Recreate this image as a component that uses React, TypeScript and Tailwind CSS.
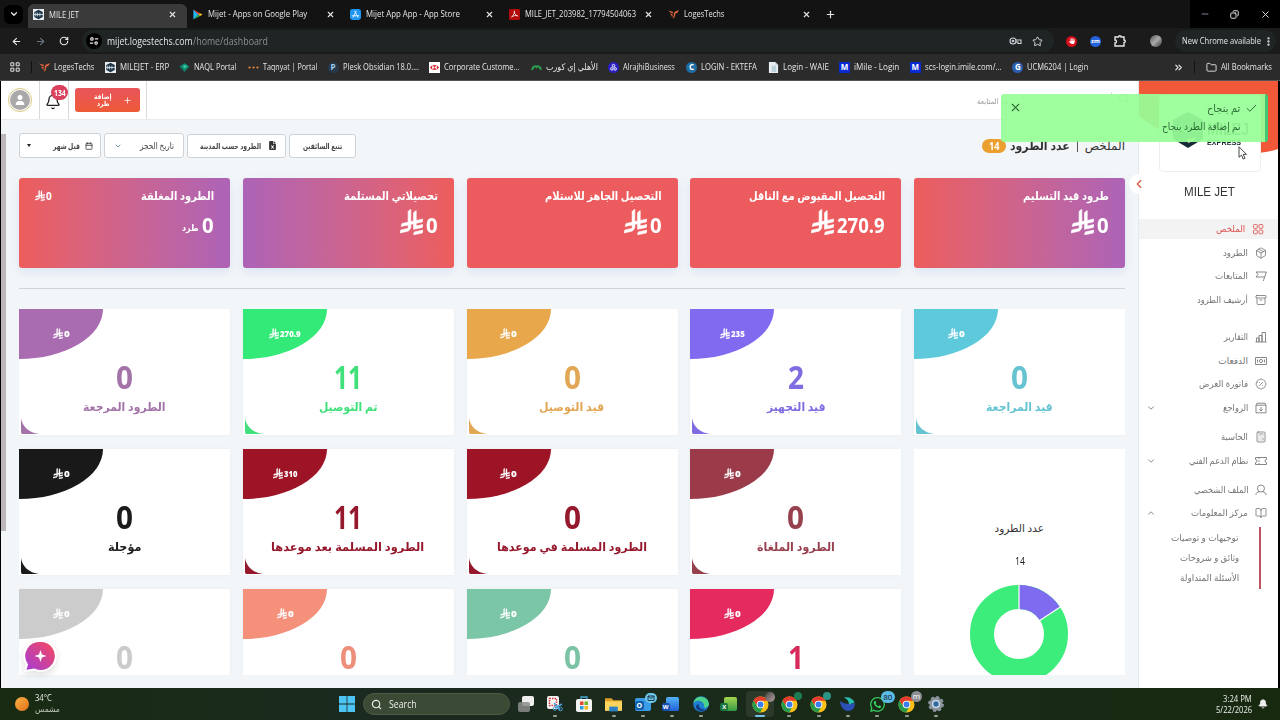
import { useLayoutEffect, useRef, type ReactNode } from "react";
import {
  Archive, ArrowLeft, ArrowRight, BadgePercent, Bell, BookOpen, Calculator, Calendar, Check, ChevronDown,
  ChevronLeft, ChevronUp, ChevronsRight, Copy, EllipsisVertical, Folder, Minus, Package, Plus, RotateCw,
  Search, Star, X,
} from "lucide-react";
import { FaFileExcel, FaHand, FaUser, FaWhatsapp } from "react-icons/fa6";

// One-line label squeezed or stretched to a fixed width
function Fit({ w, children, className = "", rtl = false }: { w: number; children: ReactNode; className?: string; rtl?: boolean }) {
  const ref = useRef<HTMLSpanElement>(null);
  useLayoutEffect(() => {
    const el = ref.current;
    if (!el || !el.offsetWidth) return;
    el.style.transform = `scaleX(${w / el.offsetWidth})`;
  }, [w]);
  return (
    <span dir={rtl ? "rtl" : "ltr"} className={`block shrink-0 whitespace-nowrap ${className}`} style={{ width: w }}>
      <span ref={ref} className={`inline-block ${rtl ? "origin-right" : "origin-left"}`}>{children}</span>
    </span>
  );
}

function Riyal({ className }: { className: string }) {
  return (
    <svg viewBox="0 0 1124.14 1256.39" className={className} fill="currentColor" stroke="currentColor" strokeWidth="30">
      <path d="M699.62 1113.02c-20.06 44.48-33.32 92.75-38.4 143.37l424.51-90.24c20.06-44.47 33.31-92.75 38.4-143.37z" />
      <path d="M1085.73 895.8c20.06-44.47 33.32-92.75 38.4-143.37l-330.68 70.33v-135.2l292.27-62.11c20.06-44.47 33.32-92.75 38.4-143.37l-330.68 70.27V66.13c-50.67 28.45-95.67 66.32-132.25 110.99v403.35l-132.25 28.11V0c-50.67 28.44-95.67 66.32-132.25 110.99v525.69l-295.91 62.88c-20.06 44.47-33.33 92.75-38.42 143.37l334.33-71.05v170.26l-358.3 76.14c-20.06 44.47-33.32 92.75-38.4 143.37l375.04-79.7c30.53-6.35 56.77-24.4 73.83-49.24l68.78-101.97c7.14-10.57 11.3-23.29 11.3-36.99v-149.98l132.25-28.11v270.4z" />
    </svg>
  );
}

function LogesIcon() {
  return (
    <svg viewBox="0 0 12 12" className="size-[11px] shrink-0" fill="#e8663c">
      <path d="M0 1.5 5 3l1 2-3-.8zM12 1 7 3.2 5.5 11 7.2 9l1-4 2-1z" />
      <path d="m2 5 3 .8-.4 4L3.8 7z" />
    </svg>
  );
}

function MileIcon() {
  return (
    <svg viewBox="0 0 12 12" className="size-[11px] shrink-0">
      <path fill="#e8edf2" d="M0 0h12v12H0z" />
      <path fill="#1c3445" d="m6 .8 4.6 2.6v5.2L6 11.2 1.4 8.6V3.4z" />
      <path stroke="#dbe7ee" strokeWidth=".9" d="M1 6h10M3 4v4M5 4v4M7.5 4v4" />
    </svg>
  );
}

function PlayIcon() {
  return (
    <svg viewBox="0 0 12 12" className="size-[11px] shrink-0">
      <path fill="#23b5f5" d="M1.5.5v11L7 6z" />
      <path fill="#33b45a" d="M1.5 11.5 7 6l1.8 1.5z" />
      <path fill="#ea4335" d="M1.500.5 7 6l1.800-1.500z" />
      <path fill="#fbc116" d="M8.800 4.500 11.500 6 8.800 7.500 7 6z" />
    </svg>
  );
}

function AppStoreIcon() {
  return (
    <svg viewBox="0 0 12 12" className="size-[11px] shrink-0">
      <rect width="12" height="12" rx="2.600" fill="#1e96f3" />
      <path d="M6.600 2.500 3.400 9M5.400 2.500 8.600 9M2.300 7.400h7.400" stroke="#fff" strokeWidth=".9" strokeLinecap="round" />
    </svg>
  );
}

function PdfIcon() {
  return (
    <svg viewBox="0 0 12 12" className="size-[11px] shrink-0">
      <rect width="12" height="12" rx="1.500" fill="#b30b0b" />
      <path d="M5.800 2.300c1.200 0-.4 4-3.200 6.800M5.800 2.300c-.9 1.200 1.300 5.200 3.800 5.300M3 8.500c1.500-1.200 4-1.700 6.500-1" stroke="#fff" strokeWidth=".8" fill="none" />
    </svg>
  );
}

const tabs = [
  { title: "MILE JET", w: 30, icon: <MileIcon /> },
  { title: "Mijet - Apps on Google Play", w: 99, icon: <PlayIcon /> },
  { title: "Mijet App App - App Store", w: 94, icon: <AppStoreIcon /> },
  { title: "MILE_JET_203982_17794504063", w: 111, icon: <PdfIcon /> },
  { title: "LogesTechs", w: 40, icon: <LogesIcon /> },
];

function Letter({ children, className }: { children: ReactNode; className: string }) {
  return (
    <span className={`flex size-[11px] shrink-0 items-center justify-center text-[8px] leading-none font-bold ${className}`}>{children}</span>
  );
}

const bookmarks = [
  { title: "LogesTechs", w: 40, icon: <LogesIcon /> },
  { title: "MILEJET - ERP", w: 49, icon: <MileIcon /> },
  {
    title: "NAQL Portal", w: 43,
    icon: (
      <svg viewBox="0 0 12 12" className="size-[11px] shrink-0">
        <path fill="#12806a" d="m6 1 5.500 4L6 11 .5 5z" />
        <circle cx="6.500" cy="5" r="2" fill="#2fc6a0" />
      </svg>
    ),
  },
  {
    title: "Taqnyat | Portal", w: 54,
    icon: (
      <svg viewBox="0 0 12 12" className="size-[11px] shrink-0" fill="#f08a3c">
        <circle cx="1.700" cy="6" r="1.200" /><circle cx="6" cy="6" r="1.200" /><circle cx="10.300" cy="6" r="1.200" />
      </svg>
    ),
  },
  { title: "Plesk Obsidian 18.0....", w: 76, icon: <Letter className="rounded-full bg-[#26384a] text-[#9fd0f0]">P</Letter> },
  {
    title: "Corporate Custome...", w: 76,
    icon: (
      <svg viewBox="0 0 12 12" className="size-[11px] shrink-0">
        <path fill="#fff" d="M0 0h12v12H0z" />
        <path fill="#d8232a" d="M3.500 3.500h5L6 6zM3.500 8.500h5L6 6zM3.500 3.500 1 6l2.500 2.500zM8.500 3.500 11 6 8.500 8.500z" />
      </svg>
    ),
  },
  {
    title: "الأهلي إي كورب", w: 52, rtl: true,
    icon: (
      <svg viewBox="0 0 12 12" className="size-[11px] shrink-0" fill="none" stroke="#2c9b50" strokeWidth="2.200">
        <path d="M1 8.500C2.500 4.500 5 4 6 5.500c1-1.500 3.500-1 5 3" />
      </svg>
    ),
  },
  {
    title: "AlrajhiBusiness", w: 52,
    icon: (
      <svg viewBox="0 0 12 12" className="size-[11px] shrink-0" fill="none" stroke="#fff">
        <circle cx="6" cy="6" r="6" fill="#2b1fc4" stroke="none" />
        <circle cx="6" cy="4" r="1.400" /><circle cx="4.200" cy="7.500" r="1.400" /><circle cx="7.800" cy="7.500" r="1.400" />
      </svg>
    ),
  },
  { title: "LOGIN - EKTEFA", w: 56, icon: <Letter className="rounded-full bg-[#1f6ea3] text-white">C</Letter> },
  {
    title: "Login - WAIE", w: 46,
    icon: (
      <svg viewBox="0 0 12 12" className="size-[11px] shrink-0">
        <path fill="#e9eef2" d="M1 0h7l3 3v9H1z" />
        <path fill="#8fb3c0" d="M8 0v3h3zM4 4h5v7H4z" opacity=".5" />
      </svg>
    ),
  },
  { title: "iMile - Login", w: 45, icon: <Letter className="bg-[#0a2bd0] text-white">M</Letter> },
  { title: "scs-login.imile.com/...", w: 77, icon: <Letter className="bg-[#0a2bd0] text-white">M</Letter> },
  { title: "UCM6204 | Login", w: 61, icon: <Letter className="rounded-full bg-[#2b5fae] text-white">G</Letter> },
];

function Browser() {
  return (
    <header className="shrink-0 text-[9px] leading-3 text-[#e6e6e6]">
      <div className="flex h-7 items-center bg-[#131313] pl-1">
        <span className="mr-[5px] flex size-[19px] shrink-0 items-center justify-center rounded-md bg-black">
          <ChevronDown className="size-2.5" strokeWidth={3} />
        </span>
        {tabs.map((tab, i) => (
          <div
            key={tab.title}
            className={`flex h-6 w-[158.7px] shrink-0 items-center gap-[5px] rounded-t-md pl-[5px] pr-[10px] ${
              i === 0 ? "self-end bg-[#3a3a3a] pb-[3px]" : ""
            }`}
          >
            {tab.icon}
            <Fit w={tab.w}>{tab.title}</Fit>
            <X className="ml-auto size-[9px] shrink-0" strokeWidth={3} />
          </div>
        ))}
        <Plus className="ml-1 size-[11px]" strokeWidth={2.5} />
        <div className="ml-auto flex h-full items-center bg-black">
          <Minus className="mx-[10px] size-[10px] text-gray-400" />
          <Copy className="mx-[10px] size-[9px] -scale-x-100" strokeWidth={2.5} />
          <X className="ml-[11px] mr-[9px] size-[11px]" />
        </div>
      </div>
      <div className="flex h-[26px] items-center bg-[#1b1b1b]">
        <ArrowLeft className="ml-[11px] size-[11px]" strokeWidth={2.5} />
        <ArrowRight className="ml-[13px] size-[11px] text-gray-500" strokeWidth={2.5} />
        <RotateCw className="ml-[13px] size-[10px]" strokeWidth={2.8} />
        <div className="ml-[13px] flex h-[22px] w-[972px] items-center rounded-full bg-[#1f2425] pl-1">
          <span className="flex size-4 items-center justify-center rounded-full bg-black">
            <svg viewBox="0 0 12 12" className="size-2.5" fill="none" stroke="currentColor" strokeWidth="1.400">
              <circle cx="3.500" cy="3.500" r="1.500" /><path d="M7 3.500h4M1 8.500h4" /><circle cx="8.500" cy="8.500" r="1.500" />
            </svg>
          </span>
          <Fit w={85.5} className="ml-[5px] text-[10px]">mijet.logestechs.com</Fit>
          <Fit w={75} className="text-[10px] text-[#8b8f91]">/home/dashboard</Fit>
          <svg viewBox="0 0 13 8" className="ml-auto h-2 w-[13px] text-gray-300" fill="none" stroke="currentColor" strokeWidth="1.100">
            <circle cx="4" cy="4" r="3" /><circle cx="4" cy="4" r=".8" /><path d="M7 3h5v3.500H9V5H7" />
          </svg>
          <Star className="ml-[10px] mr-[11px] size-[11px]" />
        </div>
        <span className="ml-3 flex size-[11px] items-center justify-center rounded-full bg-[#d5101d]">
          <FaHand className="size-1.5 text-white" />
        </span>
        <span className="ml-[13px] flex size-[11px] items-center justify-center rounded-full bg-[#2464dd] text-[6px] font-bold text-white">zm</span>
        <svg viewBox="0 0 12 12" className="ml-[13px] size-[12px]" fill="none" stroke="currentColor" strokeWidth="1.400">
          <path d="M1 2h3.500a1.300 1.300 0 0 1 2.600 0H10v3a1.300 1.300 0 0 1 0 2.600V11H1V8a1.500 1.500 0 0 0 0-3z" />
        </svg>
        <span className="ml-[24px] size-[12px] rounded-full bg-linear-to-br from-[#565a5e] via-[#aaa] to-[#36393c]" />
        <span className="ml-auto mr-1 flex h-[22px] items-center rounded-full bg-[#1f2425] pl-[7px] pr-0.5">
          <Fit w={79}>New Chrome available</Fit>
          <EllipsisVertical className="ml-0.5 size-[11px]" strokeWidth={3} />
        </span>
      </div>
      <div className="flex h-[27px] items-center gap-[10.6px] border-b border-[#555] bg-[#2b2b2c] pl-[10px] pr-2">
        <svg viewBox="0 0 10 10" className="size-[10px]" fill="none" stroke="currentColor">
          <path d="M.8.8h3v3h-3zM6.200.8h3v3h-3zM.8 6.200h3v3h-3zM6.200 6.200h3v3h-3z" />
        </svg>
        <span className="-mr-[3px] h-3 w-px bg-[#111]" />
        {bookmarks.map((b) => (
          <div key={b.title} className="flex items-center gap-1">
            {b.icon}
            <Fit w={b.w} rtl={b.rtl}>{b.title}</Fit>
          </div>
        ))}
        <ChevronsRight className="ml-auto size-[11px]" strokeWidth={2.5} />
        <span className="h-3 w-px bg-[#111]" />
        <div className="flex items-center gap-1">
          <Folder className="size-[11px]" />
          <Fit w={51}>All Bookmarks</Fit>
        </div>
      </div>
    </header>
  );
}

const totals = [
  { title: "طرود قيد التسليم", w: 86, value: "0", vw: 12, bg: "bg-linear-to-r from-[#ed5d5b] to-[#ad63b7]" },
  { title: "التحصيل المقبوض مع الناقل", w: 136, value: "270.9", vw: 48, bg: "bg-[#ec5b5d]" },
  { title: "التحصيل الجاهز للاستلام", w: 117, value: "0", vw: 12, bg: "bg-[#ec5b5d]" },
  { title: "تحصيلاتي المستلمة", w: 94, value: "0", vw: 12, bg: "bg-linear-to-r from-[#ad63b7] to-[#ed5d5b]" },
  { title: "الطرود المغلقة", w: 73, value: "0", vw: 12, bg: "bg-linear-to-r from-[#ed5d5b] to-[#ad63b7]", closed: true },
];

type Status = { label: string; w: number; count: string; amount: string; bg: string; text: string };

const statuses: Status[] = [
  { label: "قيد المراجعة", w: 67, count: "0", amount: "0", bg: "bg-[#5fc9dc]", text: "text-[#66c3d1]" },
  { label: "قيد التجهيز", w: 59, count: "2", amount: "235", bg: "bg-[#826af0]", text: "text-[#806be0]" },
  { label: "قيد التوصيل", w: 65, count: "0", amount: "0", bg: "bg-[#e8a74a]", text: "text-[#e2a755]" },
  { label: "تم التوصيل", w: 59, count: "11", amount: "270.9", bg: "bg-[#33ea78]", text: "text-[#40e07b]" },
  { label: "الطرود المرجعة", w: 83, count: "0", amount: "0", bg: "bg-[#aa6cb1]", text: "text-[#a474a9]" },
  { label: "الطرود الملغاة", w: 78, count: "0", amount: "0", bg: "bg-[#9b3b4a]", text: "text-[#97404e]" },
  { label: "الطرود المسلمة في موعدها", w: 150, count: "0", amount: "0", bg: "bg-[#9d1427]", text: "text-[#96182c]" },
  { label: "الطرود المسلمة بعد موعدها", w: 153, count: "11", amount: "310", bg: "bg-[#9d1427]", text: "text-[#96182c]" },
  { label: "مؤجلة", w: 33, count: "0", amount: "0", bg: "bg-[#191919]", text: "text-[#1b1b1b]" },
  { label: "", w: 0, count: "1", amount: "0", bg: "bg-[#e52a5f]", text: "text-[#d62a5b]" },
  { label: "", w: 0, count: "0", amount: "0", bg: "bg-[#7cc6a8]", text: "text-[#7cc3a6]" },
  { label: "", w: 0, count: "0", amount: "0", bg: "bg-[#f5917a]", text: "text-[#ee8f7b]" },
  { label: "", w: 0, count: "0", amount: "0", bg: "bg-[#cccccc]", text: "text-[#cbcbcb]" },
];

const amountWidths: Record<string, number> = { "0": 5.5, "235": 14, "310": 13.5, "270.9": 21 };
const countWidths: Record<string, number> = { "0": 17, "1": 16, "2": 16, "11": 28 };

function StatusCard({ s }: { s: Status }) {
  return (
    <div className="relative flex h-[126px] flex-col items-center bg-white shadow-[0_0_4px_rgba(0,0,0,0.04)]">
      <div dir="ltr" className={`absolute left-0 top-0 flex h-[50px] w-[84px] items-center justify-center gap-px rounded-br-[100%] text-white ${s.bg}`}>
        <Riyal className="mb-0.5 h-[11px] w-[10px]" />
        <Fit w={amountWidths[s.amount]} className="text-[9px] leading-[10px] font-extrabold">{s.amount}</Fit>
      </div>
      <Fit w={countWidths[s.count]} className={`mt-[52px] text-[31.5px] leading-8 font-bold ${s.text}`}>{s.count}</Fit>
      {s.label && <Fit w={s.w} rtl className={`mt-1.5 text-[11.5px] leading-4 font-bold ${s.text}`}>{s.label}</Fit>}
      <svg viewBox="0 0 18 16" className={`absolute bottom-px left-0.5 h-4 w-[18px] ${s.text}`} fill="currentColor">
        <path d="M0 0c1 8 8 15 18 16H1.500Q0 16 0 14z" />
      </svg>
    </div>
  );
}

function ChartCard() {
  return (
    <div className="row-span-2 flex flex-col items-center bg-white pt-[71px]">
      <Fit w={49} rtl className="text-[10.5px] leading-4 text-[#333]">عدد الطرود</Fit>
      <Fit w={10} className="mt-[17px] text-[10.5px] leading-4 text-[#222]">14</Fit>
      <svg viewBox="0 0 100 100" className="mr-px mt-[15px] size-[100px] shrink-0" fill="none" strokeWidth="24">
        <circle cx="50" cy="50" r="37" stroke="#3ced7b" />
        <path d="M50 13a37 37 0 0 1 31 16.800" stroke="#7f6bf0" />
        <path d="M50 0v26M70 37 92 22.500" stroke="#fff" strokeWidth="1.200" />
      </svg>
    </div>
  );
}

function Filters() {
  return (
    <div dir="ltr" className="flex items-center gap-[3px] text-[#444]">
      <div className="flex h-[25px] w-[82px] items-center justify-between rounded-[3px] border border-[#cdd3d8] bg-white px-[7px]">
        <span className="border-x-[2.5px] border-t-[3px] border-x-transparent border-t-[#222]" />
        <span className="flex items-center gap-[5px]">
          <Fit w={27} rtl className="text-[8px] font-bold">قبل شهر</Fit>
          <Calendar className="size-2" strokeWidth={2.5} />
        </span>
      </div>
      <div className="flex h-[25px] w-[80px] items-center justify-between rounded-[3px] border border-[#cdd3d8] bg-white px-[9px]">
        <ChevronDown className="size-2 text-[#6fa0a4]" strokeWidth={3} />
        <Fit w={34} rtl className="text-[9px]">تاريخ الحجز</Fit>
      </div>
      <div className="flex h-6 w-[99px] items-center justify-end gap-[7px] rounded-[3px] border border-[#cdd3d8] bg-white pr-[8px]">
        <Fit w={61} rtl className="text-[8px] font-bold">الطرود حسب المدينة</Fit>
        <FaFileExcel className="size-[9px] text-[#333]" />
      </div>
      <div className="flex h-6 w-[67px] items-center justify-center rounded-[3px] border border-[#cdd3d8] bg-white">
        <Fit w={39} rtl className="text-[8px] font-bold">تتبع السائقين</Fit>
      </div>
    </div>
  );
}

function Dashboard() {
  return (
    <main className="relative flex w-[1138px] shrink-0 flex-col overflow-hidden bg-[#f2f6f8]">
      <div className="flex h-[39px] shrink-0 border-b border-[#e8ebed] bg-white">
        <div className="flex w-[39px] items-center justify-center border-r border-[#d9d9d9]">
          <span className="flex size-6 items-center justify-center rounded-full border border-[#d8c67c]">
            <span className="flex size-5 items-center justify-center rounded-full bg-[#a9a9a9]">
              <FaUser className="size-2.5 text-white" />
            </span>
          </span>
        </div>
        <div className="relative flex w-[29px] items-center justify-center border-r border-[#d9d9d9]">
          <Bell className="mr-0.5 mt-1 size-4 text-[#222]" />
          <span className="absolute right-0 top-[4px] flex h-[15px] w-[17px] items-center justify-center rounded-full bg-[#d9415c] text-white">
            <Fit w={12} className="text-[8px] leading-3 font-bold">134</Fit>
          </span>
        </div>
        <div className="flex w-[78px] items-center border-r border-[#d9d9d9] pl-1.5">
          <div className="flex h-6 w-[65px] items-center justify-end gap-[11px] rounded-[3px] bg-linear-to-b from-[#e9555a] to-[#ee5a36] pr-2 text-white">
            <div className="flex flex-col items-center">
              <Fit w={18} rtl className="text-[7px] leading-[7px] font-bold">إضافة</Fit>
              <Fit w={13} rtl className="text-[7px] leading-[7px] font-bold">طرد</Fit>
            </div>
            <Plus className="size-[9px]" />
          </div>
        </div>
        <div className="ml-auto flex items-center pr-[10px]">
          <Fit w={35} rtl className="mt-1 text-[7.5px] text-[#999]">رقم المتابعة</Fit>
          <span className="ml-[99px] h-4 w-px bg-[#ddd]" />
          <Search className="ml-[6px] mb-1 size-[11px] text-[#777]" />
        </div>
      </div>

      <span className="absolute left-0 top-[53px] h-[397px] w-[5px] bg-[#bcb7bb]" />

      <div dir="rtl" className="flex flex-1 flex-col overflow-hidden pl-[18px] pr-[14px] pt-[13px] pb-[13px]">
        <div className="flex h-[25px] shrink-0 items-center justify-between">
          <div className="flex items-center text-[#333]">
            <Fit w={40} rtl className="text-[12px] leading-4">الملخص</Fit>
            <span className="mx-[7px] h-3 w-px bg-[#555]" />
            <Fit w={60} rtl className="text-[12px] leading-4 font-bold">عدد الطرود</Fit>
            <span className="mr-1 flex h-[14px] w-6 items-center justify-center rounded-full bg-[#eb9f2e] text-white">
              <Fit w={10} className="text-[10px] leading-3 font-bold">14</Fit>
            </span>
          </div>
          <Filters />
        </div>

        <div className="mt-5 grid shrink-0 grid-cols-5 gap-[12.75px]">
          {totals.map((t) => (
            <div key={t.title} className={`h-[90px] rounded-[3px] px-4 pt-2.5 text-white shadow-[0_4px_10px_rgba(150,180,230,0.25)] ${t.bg}`}>
              <div className="flex items-center justify-between">
                <Fit w={t.w} rtl className="text-[11.5px] leading-4 font-bold">{t.title}</Fit>
                {t.closed && (
                  <span className="flex items-center gap-px text-[10px] leading-4 font-bold">
                    0<Riyal className="mb-0.5 h-[11px] w-[10px]" />
                  </span>
                )}
              </div>
              <div className="mt-[5px] flex h-[30px] items-center gap-[3px]">
                <Fit w={t.vw} className="text-[22px] leading-6 font-bold">{t.value}</Fit>
                {t.closed ? (
                  <Fit w={17} rtl className="mt-2 text-[9px] leading-3 font-bold">طرد</Fit>
                ) : (
                  <Riyal className="mb-1 h-[26px] w-[23px]" />
                )}
              </div>
            </div>
          ))}
        </div>

        <hr className="mt-5 shrink-0 border-[#cbd5da]" />

        <div className="mt-5 grid min-h-0 flex-1 grid-cols-5 auto-rows-[126px] gap-x-[12.75px] gap-y-[14px] overflow-hidden">
          {statuses.slice(0, 5).map((s, i) => <StatusCard key={i} s={s} />)}
          <ChartCard />
          {statuses.slice(5).map((s, i) => <StatusCard key={i} s={s} />)}
        </div>
      </div>

      <svg viewBox="0 0 36 36" className="absolute left-[21px] top-[557px] size-9 drop-shadow-md">
        <defs>
          <linearGradient id="chat" x1="0" y1="1" x2="1" y2="0">
            <stop stopColor="#a13bd8" /><stop offset="1" stopColor="#fb4a59" />
          </linearGradient>
        </defs>
        <path d="M18.500 3a15 15 0 1 1-6 28.600L3 33l2-6.500A15 15 0 0 1 18.500 3z" fill="url(#chat)" stroke="#fff" strokeWidth="2" />
        <path d="m18.500 12 1.500 4.500 4.500 1.500-4.500 1.500-1.500 4.500-1.500-4.500-4.500-1.500 4.500-1.500z" fill="#fff" />
      </svg>
    </main>
  );
}

// Outline icons of the side menu, on a 12px grid
function Line({ children }: { children: ReactNode }) {
  return (
    <svg viewBox="0 0 12 12" className="size-3 shrink-0" fill="none" stroke="currentColor" strokeWidth=".85" strokeLinejoin="round">
      {children}
    </svg>
  );
}

const menu = [
  {
    label: "الملخص", w: 29, mt: "mt-[19px]", active: true,
    icon: <Line><rect x="1.500" y="1.500" width="3.800" height="3.800" rx=".8" /><rect x="7" y="1.500" width="3.800" height="3.800" rx=".8" /><rect x="1.500" y="7" width="3.800" height="3.800" rx=".8" /><rect x="7" y="7" width="3.800" height="3.800" rx=".8" /></Line>,
  },
  { label: "الطرود", w: 25, mt: "mt-[3.5px]", icon: <Package className="size-3 shrink-0" strokeWidth={1.6} /> },
  { label: "المتابعات", w: 33, mt: "mt-[3.5px]", icon: <Line><path d="M11.300 2H1l2 2.500L1 7h8.700M11.300 2 8.300 11" /></Line> },
  { label: "أرشيف الطرود", w: 51, mt: "mt-1", icon: <Archive className="size-3 shrink-0" strokeWidth={1.6} /> },
  { label: "التقارير", w: 24, mt: "mt-[17px]", icon: <Line><path d="M.5 11h11M1.500 11V7H4v4M4 11V4.500h3V11M7 11V1.500h3.500V11" /></Line> },
  { label: "الدفعات", w: 30, mt: "mt-[3.5px]", icon: <Line><path d="M.5 2.500h11v7H.5zM2.500 4.500v3M9.500 4.500v3" /><circle cx="6" cy="6" r="1.600" /></Line> },
  { label: "فاتورة العرض", w: 49, mt: "mt-[3.5px]", icon: <BadgePercent className="size-3 shrink-0" strokeWidth={1.6} /> },
  { label: "الرواجع", w: 25, mt: "mt-1", arrow: "down", icon: <Line><path d="M1 3.200 2 1.200h8l1 2v7.600H1zM1 3.200h10M6 5v4M4.300 7.300 6 9l1.700-1.700" /></Line> },
  { label: "الحاسبة", w: 27, mt: "mt-[8.5px]", icon: <Calculator className="size-3 shrink-0" strokeWidth={1.6} /> },
  { label: "نظام الدعم الفني", w: 59, mt: "mt-[4.5px]", arrow: "down", icon: <Line><path d="M.5 2.500h11v2a1.500 1.500 0 0 0 0 3v2H.5v-2a1.500 1.500 0 0 0 0-3zM4 2.500v1.500M4 5.200v1.600M4 8v1.500" /></Line> },
  { label: "الملف الشخصي", w: 54, mt: "mt-[8.5px]", icon: <Line><circle cx="6" cy="4.500" r="3.500" /><path d="M4.500 7.800C2.500 8 1 9 .8 11M7.500 7.800c2 .2 3.500 1.200 3.700 3.200" /></Line> },
  { label: "مركز المعلومات", w: 57, mt: "mt-[3.5px]", arrow: "up", icon: <BookOpen className="size-3 shrink-0" strokeWidth={1.6} /> },
];

const links = [
  { label: "توجيهات و توصيات", w: 68 },
  { label: "وثائق و شروحات", w: 59 },
  { label: "الأسئلة المتداولة", w: 59 },
];

function Sidebar() {
  return (
    <aside dir="rtl" className="relative w-[139px] shrink-0 bg-white shadow-[-1px_0_0_#e6eaec]">
      <svg viewBox="0 0 139 80" className="absolute left-0 top-0 h-20 w-full" preserveAspectRatio="none">
        <path d="M0 0h139v68c-14 5-34 6-60 0C52 61 22 54 0 35z" fill="#f1583a" />
      </svg>
      <div className="relative mr-[17px] mt-3.5 flex h-[77px] w-[102px] items-center justify-center rounded border border-[#eee] bg-white pb-2">
        <div dir="ltr" className="flex items-center gap-[3px]">
          <svg viewBox="0 0 32 36" className="h-9 w-8">
            <path fill="#162b38" d="m16 0 15 8v19l-15 9-15-9V8z" />
            <path fill="#f1d4a4" d="m15 27 9-2-2 4-6 2z" />
            <path stroke="#45a59c" strokeWidth="2" d="m4 14 11 6 13-5" fill="none" />
          </svg>
          <div className="mt-2 font-['Liberation_Sans'] font-bold text-[#15242d]">
            <Fit w={42} className="text-[16px] leading-[18px]">MILEJ</Fit>
            <Fit w={34} className="text-[7px] leading-[7px]">EXPRESS</Fit>
          </div>
        </div>
      </div>
      <span className="absolute -left-2.5 top-[93px] flex size-5 items-center justify-center rounded-full bg-white">
        <ChevronLeft className="size-3.5 text-[#cf5434]" />
      </span>
      <Fit w={51} className="mr-[43px] mt-3 font-['Liberation_Sans'] text-[12.5px] leading-4 text-[#333]">MILE JET</Fit>

      {menu.map(({ label, w, icon, mt, active, arrow }) => (
        <div key={label} className={`flex h-5 items-center ${mt} ${active ? "bg-[#f3f3f3] pr-[14px] text-[#de5350]" : "pr-[11px] text-[#747474]"}`}>
          {icon}
          <Fit w={w} rtl className="mr-[7px] text-[9px] leading-4">{label}</Fit>
          {arrow === "down" && <ChevronDown className="mr-auto ml-[7px] size-2.5" />}
          {arrow === "up" && <ChevronUp className="mr-auto ml-[7px] size-2.5" />}
        </div>
      ))}
      <div className="mr-[17px] mt-1 flex h-[62px] flex-col justify-center gap-1 border-r-2 border-[#bd5660] pr-5">
        {links.map((l) => (
          <Fit key={l.label} w={l.w} rtl className="text-[9px] leading-4 text-[#747474]">{l.label}</Fit>
        ))}
      </div>
    </aside>
  );
}

function Toast() {
  return (
    <div className="absolute left-[1001px] top-[94px] h-12 w-[267px] rounded-[3px] border-r-[3px] border-[#41c873] bg-[#98ff98]/93 text-[#2c6a35]">
      <X className="absolute left-2 top-[7px] size-[13px]" strokeWidth={2} />
      <div dir="rtl" className="pr-[7px] pt-1.5">
        <div className="flex items-center gap-[5px]">
          <Check className="size-[13px]" strokeWidth={1.8} />
          <Fit w={33} rtl className="text-[11px] leading-4">تم بنجاح</Fit>
        </div>
        <Fit w={78} rtl className="mr-[18px] mt-0.5 text-[10px] leading-4">تم إضافة الطرد بنجاح</Fit>
      </div>
    </div>
  );
}

function ChromeIcon({ badge }: { badge?: ReactNode }) {
  return (
    <span className="relative">
      <svg viewBox="0 0 18 18" className="size-[17px]">
        <circle cx="9" cy="9" r="8.500" fill="#fbc116" />
        <path fill="#e33b2e" d="M1.600 4.700A8.500 8.500 0 0 1 16.400 5H9a4 4 0 0 0-3.500 6z" />
        <path fill="#259b4d" d="M1.600 4.700A8.500 8.500 0 0 0 8.500 17.500L12.500 11a4 4 0 0 1-7 0z" />
        <circle cx="9" cy="9" r="4" fill="#fff" />
        <circle cx="9" cy="9" r="3.100" fill="#3b7ded" />
      </svg>
      {badge}
    </span>
  );
}

function Office({ letter, back, front }: { letter: string; back: string; front: string }) {
  return (
    <span className={`relative h-[14px] w-[13px] rounded-xs ${back}`}>
      <span className={`absolute -left-1 bottom-0 flex size-2 items-center justify-center rounded-xs text-[6px] font-bold text-white ${front}`}>{letter}</span>
    </span>
  );
}

const apps: { icon: ReactNode; running?: boolean; active?: boolean }[] = [
  { icon: <span className="relative size-4"><span className="absolute right-0 top-0 h-2.5 w-3 rounded-xs bg-[#eee]" /><span className="absolute bottom-0 left-0 h-2.5 w-3 rounded-xs bg-[#8b8d8b]/85" /></span> },
  {
    icon: (
      <svg viewBox="0 0 16 16" className="size-4">
        <rect width="12" height="13" rx="2" fill="#f5f5f5" />
        <path d="M2.500 2.500h7v7h-7z" fill="none" stroke="#d83b3b" strokeWidth="1.500" strokeDasharray="1.500 1" />
        <path d="m7 7 6 7M15 8l-7 4" stroke="#4f9fd6" strokeWidth="1.500" /><circle cx="13.500" cy="13" r="1.800" fill="none" stroke="#4f9fd6" /><circle cx="8" cy="12.500" r="1.800" fill="none" stroke="#4f9fd6" />
      </svg>
    ),
    running: true,
  },
  {
    icon: (
      <svg viewBox="0 0 16 16" className="size-4">
        <path d="M5 4V1h6v3" stroke="#48a9d8" fill="none" strokeWidth="1.300" />
        <rect y="3" width="16" height="13" rx="2" fill="#f2f2f2" />
        <path fill="#e5482d" d="M4 5.500h3.500V9H4z" /><path fill="#6fb52c" d="M8.500 5.500H12V9H8.500z" /><path fill="#2d9fe0" d="M4 10h3.500v3.500H4z" /><path fill="#f5b51c" d="M8.500 10H12v3.500H8.500z" />
      </svg>
    ),
  },
  {
    icon: (
      <svg viewBox="0 0 16 16" className="size-[17px]">
        <path fill="#dd9f26" d="M0 2h6l2 2h8v4H0z" /><path fill="#fbd35d" d="M0 5h16v9H0z" /><path fill="#2e80c4" d="M4 10h8v4.500H4z" />
      </svg>
    ),
    running: true,
  },
  {
    icon: (
      <span className="relative">
        <span className="flex h-[13px] w-4 rounded-xs bg-[#3a9be6]">
          <span className="mt-[3px] flex size-[9px] items-center justify-center rounded-xs bg-[#0f5faf] text-[7px] leading-none font-bold text-white">O</span>
        </span>
        <svg viewBox="0 0 12 10" className="absolute -right-1.5 -top-[5px] h-2.5 w-3">
          <rect width="12" height="10" rx="5" fill="#6fc6ea" /><path d="M3 3h6v4.500H3zM3 3l3 2.500L9 3" fill="none" stroke="#12303e" strokeWidth=".9" />
        </svg>
      </span>
    ),
    running: true,
  },
  { icon: <Office letter="W" back="bg-linear-to-b from-[#55b2f5] to-[#2360d8]" front="bg-[#1850b0]" />, running: true },
  {
    icon: (
      <svg viewBox="0 0 16 16" className="size-4">
        <circle cx="8" cy="8" r="7.800" fill="#1f7fd0" />
        <path fill="#4cd18a" d="M1 5a8 8 0 0 1 15 3c0 2.500-2 4-5 3.500C12 8 9 4.500 5 4.800 3 5 1.500 6 .5 7z" />
        <path fill="#123f86" d="M6 8c-1 3 2 6 7 5-4 4-11 1-10-3 .3-1 1.500-2 3-2z" />
      </svg>
    ),
    running: true,
  },
  { icon: <Office letter="X" back="bg-linear-to-b from-[#a4d64e] to-[#2f9a45]" front="bg-[#17753b]" /> },
  { icon: <ChromeIcon badge={<span className="absolute -right-1.5 -top-1 size-2.5 rounded-full bg-linear-to-br from-[#444] to-[#b9a7a5]" />} />, active: true },
  { icon: <ChromeIcon badge={<span className="absolute -right-1 -top-1 size-2 rounded-full bg-[#1d7b53]" />} />, running: true },
  { icon: <ChromeIcon badge={<span className="absolute -right-1 -top-1 size-2 rounded-full bg-[#2b9486]" />} />, running: true },
  {
    icon: (
      <svg viewBox="0 0 16 16" className="size-4">
        <path fill="#2a50b8" d="M0 5c4 3 10 4 15 2 0 5-3 8-7 8-4 0-8-5-8-10z" /><path fill="#28bfb2" d="M4 1.500c5-1 9 1 10.500 5L9 8.500C9 5 7 3 4 1.500z" />
      </svg>
    ),
    running: true,
  },
  {
    icon: (
      <span className="relative">
        <FaWhatsapp className="size-[17px] text-[#38cf62]" />
        <span className="absolute -right-[9px] -top-[5px] flex h-3 w-[14px] items-center justify-center rounded-full bg-[#59bbe6] text-[8px] leading-none text-[#112]">80</span>
      </span>
    ),
    running: true,
  },
  { icon: <ChromeIcon badge={<span className="absolute -right-[7px] -top-[5px] flex size-[11px] items-center justify-center rounded-full bg-[#8c8f94] text-[8px] leading-none text-white">m</span>} />, running: true },
  {
    icon: (
      <svg viewBox="0 0 16 16" className="size-4">
        <circle cx="8" cy="8" r="6.700" fill="#8c949d" stroke="#8c949d" strokeWidth="2.500" strokeDasharray="3 2.260" />
        <circle cx="8" cy="8" r="4" fill="#d7e3ec" /><circle cx="8" cy="8" r="2.700" fill="#2f6ba3" />
      </svg>
    ),
    running: true,
  },
];

function Taskbar() {
  return (
    <footer className="flex h-8 shrink-0 items-center bg-linear-to-r from-[#182b12] via-[#1b2a20] via-30% to-[#17290f] text-[8.5px] leading-[11px] text-[#eee]">
      <span className="ml-[15px] size-[14px] rounded-full bg-linear-to-br from-[#fbb243] to-[#e06f18]" />
      <div className="ml-1.5 w-[300px] pb-0.5">
        <Fit w={17}>34°C</Fit>
        <Fit w={25} rtl className="text-[#bcc4ba]">مشمس</Fit>
      </div>
      <svg viewBox="0 0 16 16" className="ml-1 size-4" fill="#4cc5f5">
        <path d="M0 0h7.600v7.600H0zM8.400 0H16v7.600H8.400zM0 8.400h7.600V16H0zM8.400 8.400H16V16H8.400z" />
      </svg>
      <div className="ml-2 flex h-[22px] w-[147px] items-center gap-[7px] rounded-full border border-[#4b5a45] bg-[#3b4a35] pl-[7px]">
        <Search className="size-[11px]" strokeWidth={2.5} />
        <Fit w={28} className="text-[10px]">Search</Fit>
      </div>
      <div className="ml-px flex h-full">
        {apps.map((app, i) => (
          <div key={i} className="relative flex h-full w-[29.3px] items-center justify-center">
            {app.active && <span className="absolute inset-x-px inset-y-[3px] rounded-sm bg-white/8" />}
            {app.icon}
            {app.running && <span className="absolute bottom-[3px] h-[2px] w-1 rounded-full bg-[#9aa094]" />}
            {app.active && <span className="absolute bottom-[3px] h-[2px] w-2.5 rounded-full bg-[#76c3ea]" />}
          </div>
        ))}
      </div>
      <div className="ml-auto flex flex-col items-end pb-px">
        <Fit w={29}>3:24 PM</Fit>
        <Fit w={36}>5/22/2026</Fit>
      </div>
      <Bell className="ml-[6px] mr-[12px] size-[10px]" fill="#eee" />
    </footer>
  );
}

export default function App() {
  return (
    <div className="relative flex h-[720px] w-[1280px] flex-col overflow-hidden bg-black font-['Open_Sans','DejaVu_Sans',sans-serif]">
      <Browser />
      <div className="flex min-h-0 flex-1 pl-px">
        <Dashboard />
        <Sidebar />
      </div>
      <Taskbar />
      <Toast />
      <svg viewBox="0 0 10 14" className="absolute left-[1238px] top-[146px] h-[14px] w-[10px]">
        <path d="M1 .8v10.500l2.500-2.200 1.700 4 1.800-.8-1.700-3.900h3.200z" fill="#fff" stroke="#333" strokeWidth=".9" />
      </svg>
    </div>
  );
}
